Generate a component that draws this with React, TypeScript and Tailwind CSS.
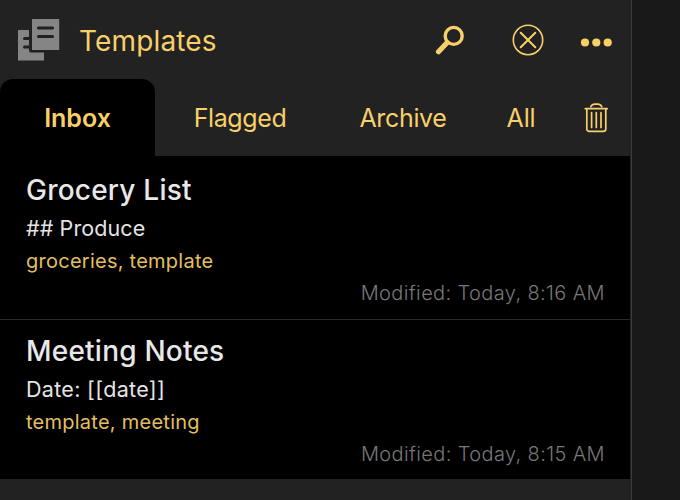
function StackIcon() {
  return (
    <svg className="h-[42px] w-[42px] shrink-0" viewBox="0 0 42 42" fill="#858585">
      <path d="M0 11h11v21h15v9.5H0z" />
      <path d="M6.5 19.5h5M6.5 28h5" stroke="#212121" strokeWidth="3" strokeLinecap="round" />
      <path d="M12.5 0H42v32.5H12.5z" fill="#212121" stroke="#212121" strokeWidth="2" />
      <path d="M14 0h27.2v31H14z" />
      <path d="M20.5 9h14M20.5 17.5h14" stroke="#212121" strokeWidth="3.2" strokeLinecap="round" />
    </svg>
  );
}

function SearchIcon() {
  return (
    <svg className="h-[30px] w-[30px]" viewBox="0 0 30 30" fill="none" stroke="#f8d06a">
      <circle cx="18.7" cy="10.9" r="8.5" strokeWidth="3.4" />
      <path d="M12 17.7l-8.5 9" strokeWidth="5.2" strokeLinecap="round" />
    </svg>
  );
}

function CloseIcon() {
  return (
    <svg className="h-8 w-8" viewBox="0 0 32 32" fill="none" stroke="#f8d06a" strokeLinecap="round">
      <circle cx="16" cy="16" r="14.7" strokeWidth="1.6" />
      <path d="M8.7 8.7l14.6 14.6M23.3 8.7L8.7 23.3" strokeWidth="2" />
    </svg>
  );
}

function MoreIcon() {
  return (
    <svg className="h-8 w-8" viewBox="0 0 32 32" fill="#f8d06a">
      <circle cx="5" cy="18.5" r="4.1" />
      <circle cx="16.3" cy="18.5" r="4.1" />
      <circle cx="27.7" cy="18.5" r="4.1" />
    </svg>
  );
}

function TrashIcon() {
  return (
    <svg className="h-[30px] w-6" viewBox="0 0 24 30" fill="none" stroke="#f8d06a" strokeWidth="1.7" strokeLinecap="round">
      <path d="M1.3 5.7h22M2.8 5.7v20.3a2.3 2.3 0 0 0 2.3 2.3h14.4a2.3 2.3 0 0 0 2.3-2.3V5.7" />
      <path d="M6.8 3.7c.9-1.8 2.4-2.6 4-2.6h3c1.6 0 3.1.8 4 2.6" />
      <path d="M7.6 9.7v14.8M12.3 9.7v14.8M17 9.7v14.8" />
    </svg>
  );
}

type Note = { title: string; body: string; bodyTracking: string; tags: string; modified: string };

const notes: Note[] = [
  { title: "Grocery List", body: "## Produce", bodyTracking: "tracking-[0.1px]", tags: "groceries, template", modified: "Today, 8:16 AM" },
  { title: "Meeting Notes", body: "Date: [[date]]", bodyTracking: "tracking-[0.32px]", tags: "template, meeting", modified: "Today, 8:15 AM" },
];

function NoteRow({ note }: { note: Note }) {
  return (
    <li className="border-b border-[#2a2a2a] pt-[13px] pr-[25px] pb-2 pl-[26px] last:border-b-0 last:pb-[7px]">
      <h2 className="text-[28px] leading-9 font-medium tracking-[0.22px] text-[#e8e8e8]">{note.title}</h2>
      <p className={`text-[21.5px] leading-10 text-[#e4e4e4] ${note.bodyTracking}`}>{note.body}</p>
      <p className="text-[20px] leading-[27px] tracking-[0.25px] text-[#e3bf62]">{note.tags}</p>
      <p className="text-right text-[20px] leading-9 font-light tracking-[0.38px] text-[#787878]">Modified: {note.modified}</p>
    </li>
  );
}

export default function App() {
  return (
    <div className="flex h-[500px] w-[680px] overflow-hidden bg-[#191919] font-['Inter',sans-serif] whitespace-nowrap text-[#f8d06a]">
      <main className="flex w-[632px] flex-col border-r border-[#3b3b3b] bg-[#222222]">
        <header className="flex h-[79px] items-center pt-px pl-[18px]">
          <StackIcon />
          <h1 className="ml-[19px] w-[356px] pt-px text-[28px] tracking-[0.15px]">Templates</h1>
          <SearchIcon />
          <div className="ml-[47px]"><CloseIcon /></div>
          <div className="ml-9"><MoreIcon /></div>
        </header>
        <nav className="flex h-[77px] items-center text-[25px]">
          <div className="flex h-full w-[155px] items-center justify-center rounded-t-[13px] bg-black pt-0.5 font-semibold">Inbox</div>
          <div className="w-[170px] pt-0.5 text-center tracking-[-0.4px]">Flagged</div>
          <div className="w-[156px] pt-0.5 text-center tracking-[-0.35px]">Archive</div>
          <div className="w-[80px] pt-0.5 text-center tracking-[-0.2px]">All</div>
          <div className="ml-[23px]"><TrashIcon /></div>
        </nav>
        <ul className="mr-px bg-black pt-[3px]">
          {notes.map((note) => <NoteRow key={note.title} note={note} />)}
        </ul>
      </main>
    </div>
  );
}
